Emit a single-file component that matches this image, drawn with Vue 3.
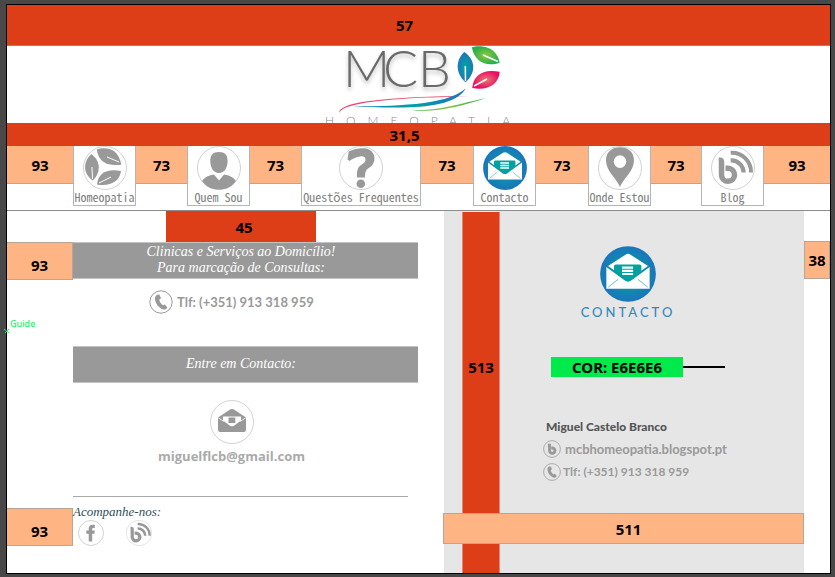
<script setup>
const navItems = [
  { label: 'Homeopatia', icon: 'leaves', gapAfter: '73' },
  { label: 'Quem Sou', icon: 'person', gapAfter: '73' },
  { label: 'Questões Frequentes', icon: 'question', gapAfter: '73' },
  { label: 'Contacto', icon: 'envelope', gapAfter: '73', active: true },
  { label: 'Onde Estou', icon: 'pin', gapAfter: '73' },
  { label: 'Blog', icon: 'blog', gapAfter: '93' },
]
</script>

<template>
  <svg class="sprite" aria-hidden="true">
    <defs>
      <radialGradient id="tealBlue">
        <stop offset="0" stop-color="#00a99d" />
        <stop offset="1" stop-color="#1b75bb" />
      </radialGradient>
      <symbol id="leaves" viewBox="0 0 44 44">
        <circle class="ring" cx="22" cy="22" r="21.5" />
        <path class="ink" d="M8.300 8C-.5 16 0 28 9.700 34.500C18 27 18 15 8.300 8Z" />
        <path class="ink" d="M13.700 3.500C22 1 35 1 38.300 18.700C26 20 16 18 13.700 3.500Z" />
        <path class="ink" d="M14 38.500C15 27 24 22 38 25C37 35 27 41 14 38.500Z" />
        <path class="vein" d="M9.500 33L9 21M36 16L24 11M16 37L28 31" />
      </symbol>
      <symbol id="person" viewBox="0 0 44 44">
        <circle class="ring" cx="22" cy="22" r="21.500" />
        <path class="ink" d="M22 6C16 6 13.200 9 13.300 15C13.400 22 16.500 27 22 27C27.500 27 30.500 22 30.600 15C30.700 9 28 6 22 6Z" />
        <path class="ink" d="M5 35C8 31 12 29 17 28.500L22 34.500L27 28.500C32 29 36 31 39 35C35 41 29 43.500 22 43.500C15 43.500 9 41 5 35Z" />
      </symbol>
      <symbol id="question" viewBox="0 0 44 44">
        <circle class="ring" cx="22" cy="22" r="21.500" />
        <path class="ink" d="M8.500 13.500L9.700 5.500C15 2.500 21 2 25 2.200C31.500 2.700 35.700 7 35.500 12.500C35.300 18 32.500 20.500 29 22.500C26.500 24.500 26 27 26 31.500H18C17.700 25 18.500 21.500 22 19C25 17 26.500 16 26.500 13.500C26.500 11 24.500 10.200 21.500 10.400C17 10.600 13 13 10.500 15Z" />
        <circle class="ink" cx="21.800" cy="37.700" r="4.300" />
      </symbol>
      <symbol id="envelope" viewBox="0 0 44 44">
        <circle cx="22" cy="22" r="21.900" fill="url(#tealBlue)" />
        <path fill="#fff" d="M6.300 15.700L20 6.800Q22 5.500 24 6.800L37.700 15.700L22 26.800Z" />
        <path fill="#00a19f" d="M11 18.500V16Q11 14.600 12.500 14.600H31Q32.500 14.600 32.500 16V19.500L24 26.500Q22 28 20 26.500L11 19.500Z" />
        <path fill="#fff" d="M5 16.500L19.500 27.200Q22 29 24.500 27.200L39 16.500V33.500H5Z" />
        <path fill="none" stroke="#fff" stroke-width="1.700" d="M17.300 17H26M17.300 19.500H26M17.300 22H26" />
        <path fill="none" stroke="#3ba9b8" stroke-width=".6" d="M6.500 32.300L14.400 26M37.500 32.300L29.600 26" />
      </symbol>
      <symbol id="pin" viewBox="0 0 44 44">
        <circle class="ring" cx="22" cy="22" r="21.500" />
        <path class="ink" fill-rule="evenodd" d="M22 41C19 33 8 25 8 14.500C8 6 14 1.300 22 1.300C30 1.300 36 6 36 14.500C36 25 25 33 22 41ZM22 9.300A6.300 6.300 0 1 0 22 21.900A6.300 6.300 0 1 0 22 9.300Z" />
      </symbol>
      <symbol id="blog" viewBox="0 0 44 44">
        <circle class="ring" cx="22" cy="22" r="21.500" />
        <path class="line" stroke-width="5.500" stroke-linejoin="round" d="M7.700 14.200H9Q10.500 14.200 10.500 16V29A6.500 6.500 0 1 0 17 22.300H14.500" />
        <path class="line" stroke-width="4" d="M19.700 6.800A19.200 19.200 0 0 1 40 26.500" />
        <path class="line" stroke-width="4.300" d="M19.700 14.500A12 12 0 0 1 32.500 26.500" />
      </symbol>
      <symbol id="phone" viewBox="0 0 24 24">
        <circle class="ring strong" cx="12" cy="12" r="11.200" />
        <path class="ink" d="M8.300 4.800L10.300 4.600L12 8.200L10.200 9.800C10.600 12 12 14 13.900 15.200L15.800 14.400L18.300 17.400C17.300 19.300 15.600 20 13.600 19.200C9 17.300 6.300 13 6 9C5.900 7 6.800 5.500 8.300 4.800Z" />
      </symbol>
      <symbol id="bring" viewBox="0 0 24 24">
        <circle class="ring strong" cx="12" cy="12" r="11.200" />
        <path class="line" stroke-width="3.800" d="M6.500 6.800H8.700V14A3.600 3.600 0 1 0 12.300 10.600H11" />
      </symbol>
      <symbol id="mail" viewBox="0 0 44 44">
        <circle class="ring" cx="22" cy="22" r="21.500" />
        <path class="ink" d="M8 17.500L20 9.500Q22 8.500 24 9.500L36 17.500V30Q36 32 34 32H10Q8 32 8 30Z" />
        <path fill="#fff" d="M13 16.500H31V20.500L24 25.700Q22 27 20 25.700L13 20.500Z" />
        <path class="ink" d="M18.500 17.500H25.300V23H18.500Z" />
        <path fill="none" stroke="#fff" stroke-width=".8" d="M8.500 18L14 21.500M35.500 18L30 21.500" />
      </symbol>
      <symbol id="facebook" viewBox="0 0 26 26">
        <circle class="ring" cx="13" cy="13" r="12.500" />
        <path class="ink" d="M10.700 21.500V13.800H8.300V10.500H10.700V8.500C10.700 6 12.200 4.700 14.500 4.700H16.800V7.900H15.300C14.500 7.900 14.200 8.200 14.200 9V10.500H16.800L16.400 13.800H14.200V21.500Z" />
      </symbol>
    </defs>
  </svg>

  <div class="page">
    <div class="frame">
      <div class="band top"><span>57</span></div>

      <header class="brand">
        <svg class="logo" viewBox="0 0 201 78" role="img" aria-label="MCB Homeopatia">
          <defs>
            <radialGradient id="leafBlue"><stop offset="0" stop-color="#00a79d" /><stop offset="1" stop-color="#1c75bc" /></radialGradient>
            <radialGradient id="leafGreen"><stop offset="0" stop-color="#8cc63f" /><stop offset="1" stop-color="#27b04b" /></radialGradient>
            <radialGradient id="leafPink"><stop offset="0" stop-color="#e77a72" /><stop offset="1" stop-color="#ec0a62" /></radialGradient>
            <linearGradient id="swooshBlue"><stop offset="0" stop-color="#1c75bc" /><stop offset=".55" stop-color="#00a0a5" /><stop offset="1" stop-color="#1c75bc" /></linearGradient>
            <linearGradient id="swooshGreen"><stop offset="0" stop-color="#27b04b" /><stop offset=".5" stop-color="#8cc63f" /><stop offset="1" stop-color="#27b04b" /></linearGradient>
          </defs>
          <text class="mark" x="25 65 100" y="41">MCB</text>
          <path fill="url(#leafBlue)" d="M146.300 6C137.500 14 137 27 147.500 36.300C158 27 158 14 146.300 6Z" />
          <path fill="url(#leafGreen)" d="M153.800 1.300C161 -1 178 -1 181.700 16.700C169 21 157 17 153.800 1.300Z" />
          <path fill="url(#leafPink)" d="M154.300 42C155 30 164 22.500 181.700 25.700C181 38 170 45 154.300 42Z" />
          <path class="logo-vein" d="M147.500 35L147.300 20M180 15.500L165 9M156 40L169 33" />
          <path fill="#e8476f" d="M21 67C22 58 45 54 102 51C122 50 137 50 152 50.700C137 50.600 122 51 102 51.800C50 54.800 25 59 21 67Z" />
          <path fill="url(#swooshBlue)" d="M27 60.500C75 60 128 60 147.700 42.500C139 58 110 61.500 80 61.500C60 61.500 45 61 27 60.500Z" />
          <path fill="url(#swooshGreen)" d="M93 64.200C120 65 140 58 168 52C145 60 118 67 93 64.200Z" />
          <text class="tagline" x="7" y="79">HOMEOPATIA</text>
        </svg>
      </header>

      <div class="band middle"><span>31,5</span></div>

      <nav class="menu">
        <span class="measure">93</span>
        <template v-for="item in navItems" :key="item.label">
          <a class="item" :class="{ active: item.active }" href="#">
            <svg class="item-icon"><use :href="'#' + item.icon" /></svg>
            <span class="item-label">{{ item.label }}</span>
          </a>
          <span class="measure">{{ item.gapAfter }}</span>
        </template>
      </nav>

      <main class="content">
        <section class="left">
          <div class="row"><div class="spacer"><span>45</span></div></div>
          <div class="row">
            <span class="measure side">93</span>
            <h2 class="bar">Clinicas e Serviços ao Domicílio!<br />Para marcação de Consultas:</h2>
          </div>
          <div class="row">
            <p class="phone">
              <svg class="phone-icon"><use href="#phone" /></svg>
              <span>Tlf: (+351) 913 318 959</span>
            </p>
          </div>
          <div class="row"><h2 class="bar">Entre em Contacto:</h2></div>
          <div class="row">
            <div class="mail">
              <svg class="item-icon"><use href="#mail" /></svg>
              <a href="mailto:miguelflcb@gmail.com">miguelflcb@gmail.com</a>
            </div>
          </div>
          <div class="row"><hr class="rule" /></div>
          <div class="row follow-row">
            <span class="measure side">93</span>
            <div class="follow">
              <p>Acompanhe-nos:</p>
              <div class="social">
                <a href="#" aria-label="Facebook"><svg><use href="#facebook" /></svg></a>
                <a href="#" aria-label="Blog"><svg><use href="#blog" /></svg></a>
              </div>
            </div>
          </div>
          <span class="guide">Guide</span>
          <svg class="guide-mark" viewBox="0 0 6 6"><path d="M0 1L5 5M1 5L5 1" stroke="#2bf06a" fill="none" /></svg>
        </section>

        <section class="panel">
          <div class="pillar"><span>513</span></div>
          <div class="card">
            <svg class="card-icon"><use href="#envelope" /></svg>
            <h1>CONTACTO</h1>
            <div class="colour"><span class="swatch">COR: E6E6E6</span><i class="leader"></i></div>
            <div class="details">
              <strong>Miguel Castelo Branco</strong>
              <p><svg><use href="#bring" /></svg><a href="#">mcbhomeopatia.blogspot.pt</a></p>
              <p class="tel"><svg><use href="#phone" /></svg><span>Tlf: (+351) 913 318 959</span></p>
            </div>
          </div>
          <span class="measure across">511</span>
        </section>

        <div class="margin"><span class="measure">38</span></div>
      </main>
    </div>
  </div>
</template>

<style>
body {
  margin: 0;
  background: #484848;
}
</style>

<style scoped>
* {
  box-sizing: border-box;
}
h1, h2, p, hr {
  margin: 0;
  font-weight: normal;
}
a {
  color: inherit;
  text-decoration: none;
}
.sprite {
  position: absolute;
  width: 0;
  height: 0;
}
.ring {
  fill: #fff;
  stroke: #d2d2d2;
  stroke-width: 1;
}
.ring.strong {
  fill: none;
  stroke: #999;
}
.ink {
  fill: #999;
}
.line {
  fill: none;
  stroke: #999;
}
.vein {
  fill: none;
  stroke: #fff;
  stroke-width: 1;
}
.page {
  display: flex;
  min-height: 100vh;
  padding: 4px 4px 3px 6px;
  font-family: "Noto Sans", "Open Sans", sans-serif;
}
.frame {
  flex: 1;
  display: flex;
  flex-direction: column;
  min-width: 0;
  border: 1px solid #000;
  background: #fff;
}
.band {
  display: flex;
  align-items: center;
  justify-content: center;
  padding-right: 28px;
  background: #dd3d17;
  color: #000;
  font-size: 15px;
  line-height: 20px;
  font-weight: 700;
}
.band.top {
  height: 41px;
  border-bottom: 1px solid #e5694a;
}
.band.middle {
  height: 23px;
}
.brand {
  display: flex;
  justify-content: center;
  height: 77px;
}
.logo {
  width: 201px;
  height: 78px;
  overflow: hidden;
}
.band.middle,
.menu {
  position: relative;
}
.mark {
  font-family: Lato, sans-serif;
  font-size: 52px;
  font-weight: 300;
  fill: #6a6a6a;
  filter: drop-shadow(0 3px 2px rgba(0, 0, 0, 0.25));
}
.tagline {
  font-family: Lato, sans-serif;
  font-size: 12px;
  font-weight: 300;
  letter-spacing: 12px;
  fill: #8a8a8a;
}
.logo-vein {
  fill: none;
  stroke: #fff;
  stroke-width: 1.5;
}
.measure {
  display: flex;
  align-items: center;
  justify-content: center;
  height: 38px;
  border: 1px solid #b9a597;
  background: #ffb484;
  color: #000;
  font-size: 15px;
  line-height: 20px;
  font-weight: 700;
}
.menu {
  display: grid;
  grid-template-columns:
    minmax(0, 66fr) minmax(0, 63fr) minmax(0, 51fr) minmax(0, 63fr) minmax(0, 51fr)
    minmax(0, 120fr) minmax(0, 52fr) minmax(0, 63fr) minmax(0, 52fr) minmax(0, 63fr)
    minmax(0, 50fr) minmax(0, 63fr) minmax(0, 66fr);
  align-items: start;
  height: 65px;
  border-bottom: 1px solid #8c8c8c;
}
.menu .measure {
  border-width: 0 0 1px;
}
.item {
  display: flex;
  flex-direction: column;
  align-items: center;
  height: 60px;
  border: 1px solid #b4b4b4;
  border-top: 0;
  color: #808080;
}
.item-icon {
  flex: none;
  width: 44px;
  height: 44px;
}
.item-label {
  font-family: "Noto Sans Mono CJK JP", "DejaVu Sans Mono", monospace;
  font-size: 12px;
  line-height: 14px;
  white-space: nowrap;
}
.content {
  flex: 1;
  display: grid;
  grid-template-columns: minmax(0, 437fr) minmax(0, 360fr) minmax(0, 26fr);
}
.left {
  position: relative;
}
.row {
  display: grid;
  grid-template-columns: minmax(0, 66fr) minmax(0, 345fr) minmax(0, 26fr);
}
.row > * {
  grid-column: 2;
}
.row > .side {
  grid-column: 1;
  grid-row: 1;
}
.side {
  padding-top: 8px;
  border-left: 0;
}
.spacer {
  justify-self: start;
  display: flex;
  align-items: center;
  justify-content: center;
  width: 150px;
  height: 31px;
  margin-left: 93px;
  padding-left: 6px;
  background: #dd3d17;
  font-size: 15px;
  line-height: 20px;
  font-weight: 700;
}
.bar {
  display: flex;
  flex-direction: column;
  align-items: center;
  justify-content: center;
  height: 37px;
  padding: 0 9px 2px 0;
  border: 1px solid #c4c4c4;
  border-width: 1px 0;
  background: #999;
  color: #fff;
  font-family: "Liberation Serif", serif;
  font-size: 14px;
  line-height: 16px;
  font-style: italic;
  text-align: center;
}
.phone {
  display: flex;
  align-items: center;
  gap: 4px;
  height: 66px;
  padding: 0 0 23px 76px;
  color: #999;
  font-family: Lato, sans-serif;
  font-size: 13px;
  line-height: 20px;
  font-weight: 700;
}
.phone-icon {
  width: 24px;
  height: 24px;
}
.mail {
  display: flex;
  flex-direction: column;
  align-items: center;
  padding: 17px 28px 0 0;
  height: 113px;
  color: #aaa;
  font-family: "Open Sans", sans-serif;
  font-size: 13px;
  line-height: 24px;
  font-weight: 700;
}
.rule {
  margin-right: 10px;
  border: 0;
  border-top: 1px solid #a8a8a8;
}
.follow-row {
  padding-top: 11px;
}
.follow {
  margin-top: -4px;
}
.follow p {
  color: #2f4f58;
  font-family: "Liberation Serif", serif;
  font-size: 13px;
  line-height: 16px;
  font-style: italic;
}
.social {
  display: flex;
  gap: 22px;
  padding-left: 5px;
}
.social svg {
  display: block;
  width: 26px;
  height: 26px;
}
.guide {
  position: absolute;
  left: 3px;
  top: 107px;
  color: #2bf06a;
  font-size: 9px;
  line-height: 12px;
  font-weight: 500;
}
.guide-mark {
  position: absolute;
  left: -3px;
  top: 117px;
  width: 6px;
  height: 6px;
}
.panel {
  position: relative;
  display: flex;
  padding: 1px 0 0 18px;
  background: #e6e6e6;
}
.pillar {
  flex: none;
  display: flex;
  justify-content: center;
  width: 38px;
  padding-top: 145px;
  border: 1px solid #e08a72;
  border-width: 0 1px;
  background: #dd3d17;
  font-size: 15px;
  line-height: 20px;
  font-weight: 700;
}
.card {
  flex: 1;
  display: flex;
  flex-direction: column;
  align-items: center;
  min-width: 0;
  padding: 34px 48px 0 0;
}
.card-icon {
  width: 56px;
  height: 56px;
}
.card h1 {
  margin-top: 1px;
  color: #3388bf;
  font-family: Lato, sans-serif;
  font-size: 13px;
  line-height: 18px;
  font-weight: 500;
  letter-spacing: 3px;
}
.colour {
  display: flex;
  align-items: center;
  margin: 36px 0 0 20px;
}
.swatch {
  width: 132px;
  background: #00ea4b;
  color: #000;
  font-family: "Noto Sans", sans-serif;
  font-size: 15px;
  line-height: 20px;
  font-weight: 700;
  text-align: center;
}
.leader {
  width: 42px;
  border-top: 2px solid #000;
}
.details {
  display: flex;
  flex-direction: column;
  width: 180px;
  margin: 40px 0 0 10px;
  color: #999;
  font-family: Lato, sans-serif;
  font-size: 12px;
  line-height: 20px;
  font-weight: 700;
}
.details strong {
  padding-left: 3px;
  color: #555;
}
.details p {
  display: flex;
  align-items: center;
  gap: 4px;
  height: 23px;
  font-weight: 700;
  white-space: nowrap;
}
.details p a {
  font-size: 13px;
}
.details .tel {
  gap: 2px;
}
.details svg {
  flex: none;
  width: 18px;
  height: 18px;
}
.across {
  position: absolute;
  left: -1px;
  right: 0;
  bottom: 29px;
  height: 31px;
  padding-left: 10px;
}
.margin {
  padding-top: 30px;
}
</style>
